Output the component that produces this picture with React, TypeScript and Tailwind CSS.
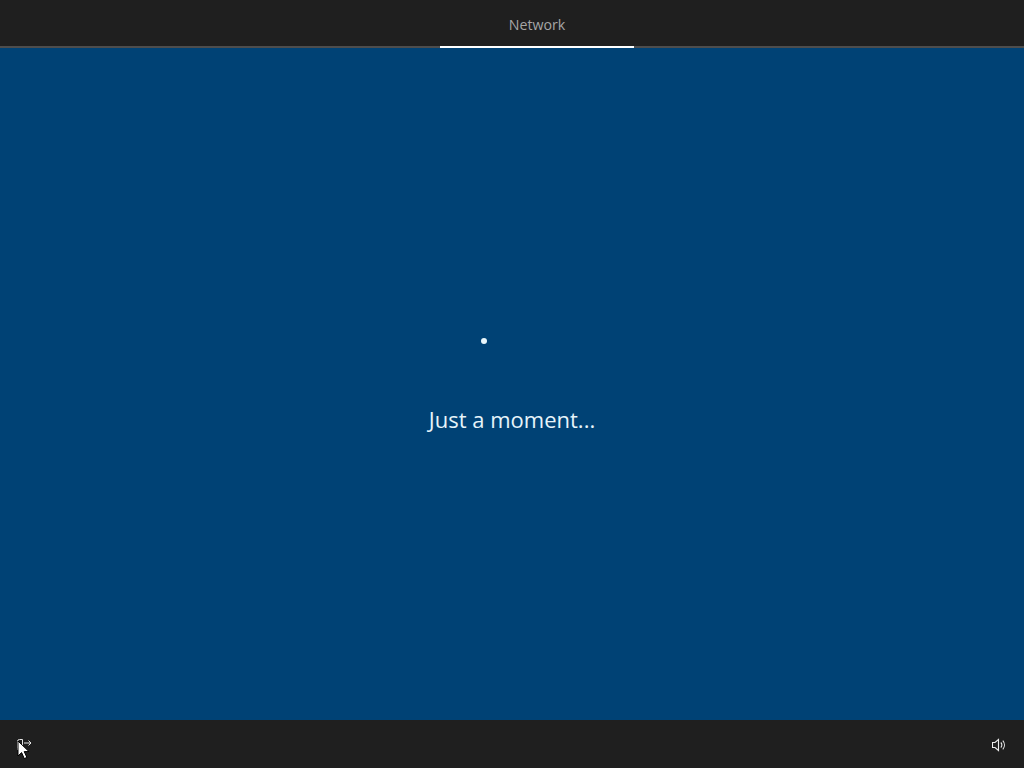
export default function App() {
  return (
    <div className="flex h-[768px] w-[1024px] flex-col overflow-hidden bg-[#004275] font-['Open_Sans','Noto_Sans',sans-serif]">
      <header className="flex h-12 flex-col bg-[#1f1f1f]">
        <div className="flex h-[46px] items-center pl-[440px]">
          <div className="w-[194px] pt-[3px] text-center text-[14.2px] text-[#a6a6a6]">Network</div>
        </div>
        <div className="h-[2px] bg-[#4d4d4d] pl-[440px]">
          <div className="h-[2px] w-[194px] bg-white" />
        </div>
      </header>
      <main className="flex flex-1 flex-col items-center bg-[#004275] pt-[276px]">
        <div className="relative h-[56px] w-[56px]">
          <div className="absolute left-[-3px] top-[14px] h-[6px] w-[6px] rounded-full bg-[#e8f6fb]" />
        </div>
        <div className="mt-[23px] text-[22px] font-normal leading-[32px] text-[#e6f4fa]">Just a moment...</div>
      </main>
      <footer className="flex h-12 items-center justify-between bg-[#1f1f1f] pl-[16px] pr-[18px] pt-[2px]">
        <div className="relative h-4 w-4">
          <svg width="16" height="16" viewBox="0 0 16 16" fill="none" stroke="#e6e6e6" strokeWidth="1">
            <path d="M1.500 4.500a2 2 0 0 1 2-2h3v11h-3a2 2 0 0 1-2-2z" />
            <path d="M8 6h7M12.500 3.500L15 6l-2.500 2.500" />
          </svg>
          <svg className="absolute left-[1px] top-[3px]" width="14" height="20" viewBox="0 0 14 20">
            <path d="M1 1v15l3.600-3.400 2.700 6 2.600-1.200-2.700-5.800H12z" fill="#ffffff" stroke="#000000" strokeWidth="1" />
          </svg>
        </div>
        <svg width="14" height="14" viewBox="0 0 14 14" fill="none" stroke="#ececec" strokeWidth="1.100">
          <path d="M0.500 4.500h2.500L6.500 1.500v11L3 9.500H0.500z" />
          <path d="M8.800 4.500a3.500 3.500 0 0 1 0 5M10.800 2.700a6.500 6.500 0 0 1 0 8.600" />
        </svg>
      </footer>
    </div>
  );
}
